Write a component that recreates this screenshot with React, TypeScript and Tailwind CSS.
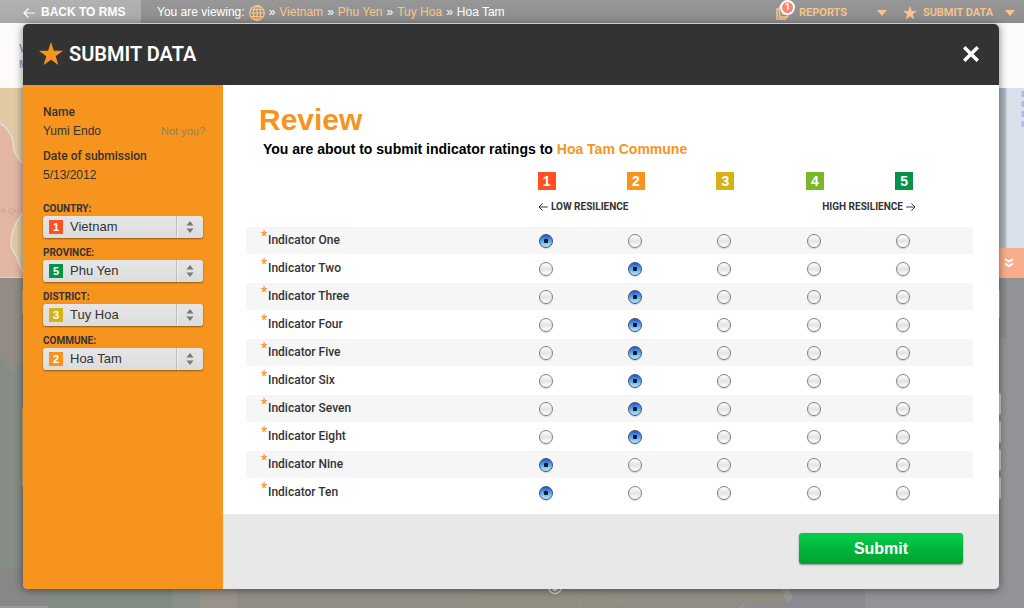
import React, { useState } from "react";

const DIN = "font-[Roboto,'Liberation_Sans',sans-serif]";

const LEVEL_COLORS: Record<number, string> = {
  1: "bg-[#ff5023]",
  2: "bg-[#f7941d]",
  3: "bg-[#d5b315]",
  4: "bg-[#79b82b]",
  5: "bg-[#079247]",
};

const INDICATORS = [
  { name: "One", rating: 1 },
  { name: "Two", rating: 2 },
  { name: "Three", rating: 2 },
  { name: "Four", rating: 2 },
  { name: "Five", rating: 2 },
  { name: "Six", rating: 2 },
  { name: "Seven", rating: 2 },
  { name: "Eight", rating: 2 },
  { name: "Nine", rating: 1 },
  { name: "Ten", rating: 1 },
];

const PLACES = [
  { id: "country", label: "COUNTRY:", value: "Vietnam", level: 1 },
  { id: "province", label: "PROVINCE:", value: "Phu Yen", level: 5 },
  { id: "district", label: "DISTRICT:", value: "Tuy Hoa", level: 3 },
  { id: "commune", label: "COMMUNE:", value: "Hoa Tam", level: 2 },
];

const LEVELS = [1, 2, 3, 4, 5];

function Star({ className }: { className: string }) {
  return (
    <svg viewBox="0 0 24 24" className={className} fill="currentColor" aria-hidden="true">
      <path d="M12 0l2.900 8.700H24l-7.300 5.500 2.700 8.900-7.400-5.400-7.400 5.400 2.700-8.900L0 8.700h9.100z" />
    </svg>
  );
}

function Arrow({ className }: { className: string }) {
  return (
    <svg viewBox="0 0 12 10" className={className} fill="none" stroke="currentColor" strokeWidth="1.200" aria-hidden="true">
      <path d="M12 5H1M5.500 .5L1 5l4.500 4.500" />
    </svg>
  );
}

function Caret() {
  return (
    <svg viewBox="0 0 10 6" className="h-1.5 w-2.5" fill="currentColor" aria-hidden="true">
      <path d="M0 0h10L5 6z" />
    </svg>
  );
}

function Globe() {
  return (
    <svg viewBox="0 0 16 16" className="h-4 w-4" fill="none" stroke="#fbc588" strokeWidth="1.200" aria-hidden="true">
      <circle cx="8" cy="8" r="7.300" />
      <ellipse cx="8" cy="8" rx="3.600" ry="7.300" />
      <path d="M8 .7v14.600M.7 8h14.600M2 4.500h12M2 11.500h12" />
    </svg>
  );
}

function MapBackdrop() {
  return (
    <svg
      className="absolute inset-0 h-full w-full"
      viewBox="0 0 1024 608"
      preserveAspectRatio="none"
      aria-hidden="true"
    >
      <rect width="1024" height="608" fill="#929396" />
      <rect width="1024" height="88" fill="#fcfbfa" />
      <rect y="88" width="100" height="190" fill="#e0c9a3" />
      <path
        d="M-2 123c5 1 9 5 12 11 4 6 3 10 4 16 2 6 5 11 13 17v42c-9 8-14 18-16 30-1 10 3 12 6 19 3 8 5 14 10 20H-2z"
        fill="#e3b5a3"
        stroke="#e5dcd5"
        strokeWidth="1.500"
      />
      <text x="1" y="213" fontSize="8" fontWeight="bold" fill="#d3a594" fontFamily="Liberation Sans">h Qu</text>
      <rect y="278" width="70" height="330" fill="#858d86" />
      <path d="M0 278h24v83l-12 12-12-18z" fill="#928c84" />
      <path d="M0 297l24-16" stroke="#8c918b" />
      <rect y="568" width="48" height="40" fill="#878787" />
      <rect y="606" width="48" height="2" fill="#9b9b9b" />
      <rect x="48" y="580" width="125" height="28" fill="#828b84" />
      <rect x="172" y="580" width="30" height="28" fill="#899089" />
      <path d="M200 580h590v28H198z" fill="#928d84" />
      <path d="M200 580h37v28h-37z" fill="#99928b" />
      <path d="M468 588l5 12-7 8h150l5-8-10-1-20-20z" fill="#918f82" />
      <path d="M470 590c-4 12 7 13 17 18M568 582l12 14 1 12M610 608c4-6 16-9 20-5l2 5" fill="none" stroke="#949589" />
      <path d="M785 580h80v28H742l4-5 31 4 9-9z" fill="#8b8c91" />
      <path d="M785 580l8 18-6 4-8-17zM748 600l-6 8h-3z" fill="#9b9892" />
      <circle cx="555" cy="587" r="6.500" fill="none" stroke="#e2e2de" strokeWidth="1.200" />
      <circle cx="555" cy="588" r="3" fill="#e2e2de" />
      <rect x="990" y="88" width="16" height="160" fill="#adb6c0" />
      <rect x="1006" y="88" width="18" height="160" fill="#d9e1eb" />
      <path d="M1006 88v160" stroke="#c4ccd5" />
      <path d="M1023 91v38" stroke="#b4bade" strokeWidth="3" strokeDasharray="6 4" />
      <rect x="990" y="278" width="16" height="60" fill="#8b8c8f" />
      <rect x="22" y="290" width="4" height="24" fill="#cda979" />
      <rect x="22" y="408" width="4" height="78" fill="#cda979" />
      <rect x="996" y="290" width="4" height="28" fill="#d8a48a" />
      <g fill="#d2d2d3">
        <rect x="990" y="393" width="11" height="22" rx="2" />
        <rect x="990" y="421" width="11" height="22" rx="2" />
        <rect x="990" y="449" width="11" height="22" rx="2" />
        <rect x="990" y="477" width="11" height="22" rx="2" />
      </g>
      <g fill="#7fa5d2" fontSize="10" fontWeight="bold" fontFamily="Liberation Sans">
        <text x="19" y="52">V</text>
        <text x="19" y="68">M</text>
      </g>
    </svg>
  );
}

function TopBar() {
  return (
    <header className="relative flex h-[23px] items-center justify-between bg-linear-to-b from-[#979797] to-[#8d8d8d] pr-[9px] text-xs leading-[23px] text-white">
      <div className="flex items-center">
        <a href="#rms" className="flex h-[23px] w-[141px] items-center gap-1.5 bg-linear-to-b from-[#b1b1b1] to-[#a9a9a9] pt-0.5 pl-[23px] font-bold">
          <Arrow className="h-2.5 w-3" />
          BACK TO RMS
        </a>
        <nav aria-label="Location" className="ml-4 flex items-center gap-1 pt-0.5">
          <span>You are viewing:</span>
          <a href="#world" aria-label="World"><Globe /></a>
          <span>»</span>
          <a href="#vietnam" className="text-[#fbc588]">Vietnam</a>
          <span>»</span>
          <a href="#phu-yen" className="text-[#fbc588]">Phu Yen</a>
          <span>»</span>
          <a href="#tuy-hoa" className="text-[#fbc588]">Tuy Hoa</a>
          <span>»</span>
          <span>Hoa Tam</span>
        </nav>
      </div>
      <div className={`flex items-center pt-0.5 text-[11px] font-semibold text-[#fbc588] ${DIN}`}>
        <button type="button" className="flex h-[23px] items-center">
          <span className="relative mr-2.5 flex">
            <svg viewBox="0 0 13 14" className="h-3.5 w-[13px]" fill="none" stroke="currentColor" strokeWidth="1.500" aria-hidden="true">
              <path d="M2.800 3H1v10h8.500v-2M3.500 1h8v10h-8zM5.500 5.500h4M5.500 8h4" />
            </svg>
            <span className="absolute -top-1.5 left-1 flex h-[15px] w-[15px] items-center justify-center rounded-full border-2 border-white bg-[#ff8372] text-[9px] leading-none text-white">1</span>
          </span>
          REPORTS
          <span className="ml-[30px]"><Caret /></span>
        </button>
        <button type="button" className="ml-4 flex h-[23px] items-center">
          <Star className="mr-1.5 h-3.5 w-3.5" />
          SUBMIT DATA
          <span className="ml-3"><Caret /></span>
        </button>
      </div>
    </header>
  );
}

function PlaceSelect({ id, label, value, level }: (typeof PLACES)[number]) {
  return (
    <div className="mb-[7px]">
      <label htmlFor={id} className={`block text-[10px] leading-[15px] font-bold text-[#333] ${DIN}`}>{label}</label>
      <div className="relative">
        <select
          id={id}
          className="block h-[22px] w-full appearance-none rounded-[3px] bg-linear-to-b from-[#e6e6e6] to-[#dcdcdc] pl-[27px] text-[13px] text-[#333] shadow-[0_1px_2px_rgba(0,0,0,0.4)]"
        >
          <option>{value}</option>
        </select>
        <span className={`pointer-events-none absolute top-1 left-1.5 h-3.5 w-3.5 text-center text-[11px] leading-[14px] font-bold text-white ${LEVEL_COLORS[level]}`}>
          {level}
        </span>
        <span className="pointer-events-none absolute inset-y-0 right-0 flex w-[27px] items-center justify-center border-l border-[#bdbdbd] shadow-[inset_1px_0_0_#f0f0f0]">
          <svg viewBox="0 0 8 12" className="h-3 w-2" fill="#777" aria-hidden="true">
            <path d="M4 0l3.500 4.500h-7zM4 12L.5 7.500h7z" />
          </svg>
        </span>
      </div>
    </div>
  );
}

function Sidebar() {
  return (
    <aside className="w-[200px] shrink-0 bg-[#f7941d] px-5 pt-[18px] text-[#333]">
      <dl className="mb-4 text-xs leading-[19px]">
        <dt className={`font-medium ${DIN}`}>Name</dt>
        <dd className="-mr-0.5 mb-1.5 flex justify-between">
          Yumi Endo
          <a href="#switch-user" className="text-[11px] text-[#94816a]">Not you?</a>
        </dd>
        <dt className={`font-medium ${DIN}`}>Date of submission</dt>
        <dd>5/13/2012</dd>
      </dl>
      {PLACES.map((place) => (
        <PlaceSelect key={place.id} {...place} />
      ))}
    </aside>
  );
}

function RatingTable() {
  const [ratings, setRatings] = useState(INDICATORS.map((i) => i.rating));
  return (
    <table className={`w-full table-fixed border-separate border-spacing-0 text-[#333] ${DIN}`}>
      <colgroup>
        <col className="w-[35.2%]" />
        {LEVELS.map((level) => (
          <col key={level} className="w-[12.3%]" />
        ))}
        <col />
      </colgroup>
      <thead>
        <tr className="h-[26px]">
          <td />
          {LEVELS.map((level) => (
            <th key={level} scope="col" className="p-0">
              <span className={`mx-auto block h-[18px] w-[18px] text-center font-['Liberation_Sans',sans-serif] text-sm leading-[19px] font-bold text-white ${LEVEL_COLORS[level]}`}>
                {level}
              </span>
            </th>
          ))}
          <td />
        </tr>
        <tr className="h-[33px] text-[10px] leading-[26px] font-bold">
          <td />
          <td colSpan={2} className="p-0 pl-9 align-top">
            <span className="flex items-center gap-[3px]">
              <Arrow className="h-2 w-2.5" />
              LOW RESILIENCE
            </span>
          </td>
          <td />
          <td colSpan={2} className="p-0 pr-[33px] align-top">
            <span className="flex items-center justify-end gap-[3px]">
              HIGH RESILIENCE
              <Arrow className="h-2 w-2.5 rotate-180" />
            </span>
          </td>
          <td />
        </tr>
      </thead>
      <tbody>
        {INDICATORS.map((indicator, row) => (
          <tr key={indicator.name} className="h-7 odd:bg-[#f6f6f6] *:border-b *:border-white">
            <th scope="row" className="p-0 pl-[15px] text-left text-xs leading-[27px] font-medium">
              <span className="flex h-[27px]">
                <span className="w-[7px] text-sm leading-[19px] text-[#f7941d]">*</span>
                Indicator {indicator.name}
              </span>
            </th>
            {LEVELS.map((level) => (
              <td key={level} className="p-0 pr-0.5">
                <input
                  type="radio"
                  name={`indicator-${indicator.name}`}
                  aria-label={`Indicator ${indicator.name}: ${level}`}
                  checked={ratings[row] === level}
                  onChange={() => setRatings(ratings.map((r, i) => (i === row ? level : r)))}
                  className="mx-auto block h-3.5 w-3.5 appearance-none rounded-full border border-[#808080] bg-linear-to-b from-white via-[#e4e4e4] to-white shadow-[0_1px_1px_rgba(0,0,0,0.15)] checked:border-[#42506e] checked:bg-[radial-gradient(circle_at_50%_50%,#0b1733_0_2px,transparent_2.5px),linear-gradient(#2857bd,#559ee8_45%,#b5ecff)]"
                />
              </td>
            ))}
            <td />
          </tr>
        ))}
      </tbody>
    </table>
  );
}

export default function App() {
  return (
    <div className="relative flex min-h-screen flex-col overflow-hidden font-['Liberation_Sans',Arial,sans-serif]">
      <MapBackdrop />
      <TopBar />
      <button type="button" aria-label="Expand panel" className="absolute top-[248px] right-0 flex h-[30px] w-[26px] items-center justify-center bg-[#f9ae8b] pr-1 text-white">
        <svg viewBox="0 0 10 10" className="h-2.5 w-2.5" fill="none" stroke="currentColor" strokeWidth="2" aria-hidden="true">
          <path d="M1 1l4 2.500L9 1M1 5.500L5 8l4-2.500" />
        </svg>
      </button>
      <main
        role="dialog"
        aria-labelledby="dialog-title"
        className="relative mt-px mr-[25px] mb-[19px] ml-[23px] flex flex-1 flex-col overflow-hidden rounded-[5px] bg-white shadow-[0_1px_8px_rgba(0,0,0,0.5)]"
      >
        <div className="flex h-[61px] items-center justify-between bg-[#333] pr-5 pb-0.5 pl-4 text-white">
          <h1 id="dialog-title" className={`flex items-center gap-1.5 text-xl font-semibold ${DIN}`}>
            <Star className="h-6 w-6 text-[#f7941d]" />
            SUBMIT DATA
          </h1>
          <button type="button" aria-label="Close">
            <svg viewBox="0 0 16 16" className="h-4 w-4" stroke="currentColor" strokeWidth="3.500" aria-hidden="true">
              <path d="M1.200 1.200l13.600 13.600M14.800 1.200L1.200 14.800" />
            </svg>
          </button>
        </div>
        <div className="flex flex-1">
          <Sidebar />
          <form className="flex min-w-0 flex-1 flex-col" onSubmit={(e) => e.preventDefault()}>
            <div className="flex-1 pt-[17px] pr-[26px] pb-[7px] pl-[23px]">
              <h2 className="pl-[13px] text-[30px] leading-9 font-bold text-[#f7941d]">Review</h2>
              <p className="mt-px mb-[9px] pl-[17px] text-sm leading-5 font-bold text-black">
                You are about to submit indicator ratings to <span className="text-[#f7941d]">Hoa Tam Commune</span>
              </p>
              <RatingTable />
            </div>
            <div className="flex h-[75px] items-center justify-end bg-[#e8e8e8] pr-9 pb-1.5">
              <button
                type="submit"
                className="h-[31px] w-[164px] rounded-[3px] bg-linear-to-b from-[#02cb48] from-10% via-[#02b63c] via-50% to-[#02a030] text-base font-bold text-white shadow-[0_1px_2px_rgba(0,0,0,0.4)]"
              >
                Submit
              </button>
            </div>
          </form>
        </div>
      </main>
    </div>
  );
}
